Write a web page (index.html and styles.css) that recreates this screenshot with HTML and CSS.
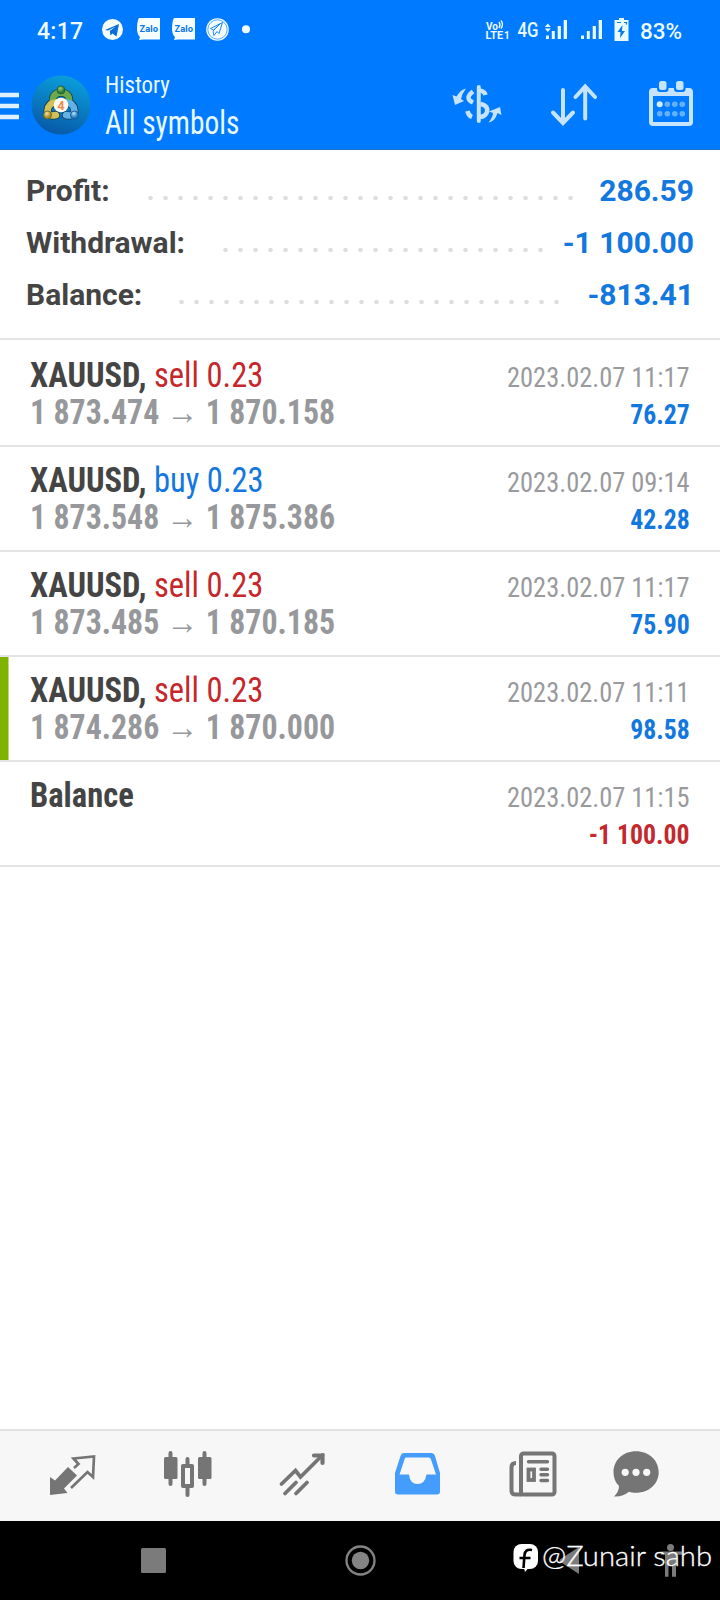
FILE: index.html
```html
<!DOCTYPE html>
<html lang="en">
<head>
<meta charset="utf-8">
<title>History</title>
<link rel="stylesheet" href="styles.css">
</head>
<body>
<div class="phone">
  <header class="top">
    <div class="status">
      <span class="clock">4:17</span>
      <svg class="notices" width="150" height="24" viewBox="101 17 150 24">
        <circle cx="112.500" cy="29.500" r="10.500" fill="#f4fdff"/>
        <path d="M105 30l14-6-2.500 12.500-4-3-2 2-.8-4.500 6-4.500-7.500 4z" fill="#0a70d8"/>
        <g><path d="M139 18h21v21.500h-17l-4 .5 1-3q-3-3-3-8 0-8 2-11z" fill="#f4fdff"/>
        <text x="139.500" y="32" class="zalo" textLength="18.500" lengthAdjust="spacingAndGlyphs">Zalo</text></g>
        <g transform="translate(35 0)"><path d="M139 18h21v21.500h-17l-4 .5 1-3q-3-3-3-8 0-8 2-11z" fill="#f4fdff"/>
        <text x="139.500" y="32" class="zalo" textLength="18.500" lengthAdjust="spacingAndGlyphs">Zalo</text></g>
        <circle cx="217.500" cy="29.500" r="11.300" fill="#f4fdff"/>
        <g fill="none" stroke="#1787f5" stroke-width="1"><circle cx="217.500" cy="29.500" r="9.700" stroke-width=".7"/><path d="M210.500 28.500l12-6-3.500 11-2-2-3 4-1-4.500 7-7-6.500 6z"/></g>
        <circle cx="246" cy="29.300" r="4" fill="#f4fdff"/>
      </svg>
      <svg class="signals" width="148" height="26" viewBox="484 16 148 26">
        <g fill="#e9faff">
          <text x="486" y="29.500" class="volte" textLength="12" lengthAdjust="spacingAndGlyphs">Vo</text>
          <text x="485.500" y="39" class="volte" textLength="17.500" lengthAdjust="spacingAndGlyphs">LTE</text>
          <text x="504" y="39" class="volte">1</text>
          <path d="M499 22q2 3 0 6M501 20.500q3 4 0 8" fill="none" stroke="#e9faff" stroke-width="1.400"/>
          <text x="517.500" y="36.500" class="fourg" textLength="21" lengthAdjust="spacingAndGlyphs">4G</text>
          <path d="M544.800 27l3-3.500 3 3.500zM544.800 28.500h6l-3 3.500zM546 35.500h3v3.500h-3zM551.800 31h3v8h-3zM557.700 26h3.200v13h-3.200zM563.700 20h3.300v19h-3.300z"/>
          <path d="M581 35.500h3v3.500h-3zM586.800 31h3v8h-3zM592.700 26h3.200v13h-3.200zM598.700 20h3.300v19h-3.300z"/>
          <path d="M619 18h5v2h4.500v21H614.500V20h4.500z"/>
        </g>
        <path d="M622.500 25l-5 7h3l-.5 6 5-7h-3z" fill="#087ae5"/>
        <path d="M617 22.500h4M624 22.500h2.500v2" stroke="#087ae5" stroke-width="1.200" fill="none"/>
      </svg>
      <span class="percent">83%</span>
    </div>
    <div class="appbar">
      <svg class="burger" width="19" height="30" viewBox="0 0 19 30"><path d="M0 5h19M0 16h19M0 27h19" stroke="#dff1ff" stroke-width="4.500"/></svg>
      <svg class="logo" width="60" height="62" viewBox="30 74 60 62">
        <defs>
          <linearGradient id="disc" x1=".7" y1="0" x2=".4" y2="1"><stop offset="0" stop-color="#0aa0dc"/><stop offset="1" stop-color="#0859a8"/></linearGradient>
          <radialGradient id="green" cx=".4" cy=".3"><stop offset="0" stop-color="#a4cf6c"/><stop offset="1" stop-color="#2a7d38"/></radialGradient>
          <radialGradient id="gold" cx=".4" cy=".3"><stop offset="0" stop-color="#f5e592"/><stop offset="1" stop-color="#a9902c"/></radialGradient>
          <radialGradient id="sky" cx=".4" cy=".3"><stop offset="0" stop-color="#b5e4fb"/><stop offset="1" stop-color="#257fc4"/></radialGradient>
        </defs>
        <circle cx="60" cy="105" r="29.600" fill="url(#disc)"/>
        <g fill="none" stroke-width="6.500" stroke-linecap="round">
          <path d="M52 102q-1-9 8-9.500 9 .5 8 9.500" stroke="#153f3c" stroke-width="8"/>
          <path d="M55 115q-8 2-8.500-4 .5-8 8-8.500" stroke="#153f3c" stroke-width="8"/>
          <path d="M65 115q8 2 8.500-4-.5-8-8-8.500" stroke="#123f6b" stroke-width="8"/>
          <path d="M52 102q-1-9 8-9.500 9 .5 8 9.500" stroke="#6aa94c"/>
          <path d="M55 115q-8 2-8.500-4 .5-8 8-8.500" stroke="#d2c05a"/>
          <path d="M65 115q8 2 8.500-4-.5-8-8-8.500" stroke="#62b2e4"/>
        </g>
        <circle cx="60" cy="90" r="4" fill="url(#green)" stroke="#1d5c35" stroke-width=".8"/>
        <circle cx="46.500" cy="115" r="4" fill="url(#gold)" stroke="#5c5a24" stroke-width=".8"/>
        <circle cx="73.500" cy="115" r="4" fill="url(#sky)" stroke="#164f86" stroke-width=".8"/>
        <circle cx="60" cy="105" r="7.300" fill="#fffaf2"/>
        <text x="56.300" y="109.800" class="four">4</text>
      </svg>
      <div class="titles"><div class="sub"><span class="cond">History</span></div><div class="main"><span class="cond">All symbols</span></div></div>
      <svg class="actions" width="243" height="50" viewBox="450 78 243 50">
        <g fill="none" stroke="#c6e4ff" stroke-width="4" stroke-linecap="round">
          <path d="M478.800 87v34"/>
          <path d="M485.500 95q-1-4-6-4.500M473 91.500q-9 7 0 11M480.500 104q8 1.500 6.500 8-1.500 4.500-7 5M467.500 111q.8 4.500 4.500 6" stroke-width="4.500" stroke-linecap="butt"/>
        </g>
        <g fill="#c6e4ff">
          <path d="M466 88.500q-5.500 1-9.500 8l-4-1.500 2.500 10 9-4-3-2q1-5.500 5-10.500z"/>
          <path d="M488.500 122.500q6.500-1 9-9.500l4 2-1.500-8-11 4.500 4 1.500q0 4-4.500 9.500z"/>
        </g>
        <path d="M563 90v32M553 112.500l10 10.500 10-10.500M585.200 118.500V87M575.500 97l9.700-10.500L595 97" fill="none" stroke="#c6e4ff" stroke-width="4" stroke-linecap="round"/>
        <rect x="651" y="90" width="40" height="34" rx="2" fill="none" stroke="#c6e4ff" stroke-width="4"/>
        <path d="M650 89h42v7h-42z" fill="#c6e4ff"/>
        <rect x="657" y="79" width="11.500" height="13" rx="3" fill="#007aff"/><rect x="674" y="79" width="11.500" height="13" rx="3" fill="#007aff"/>
        <rect x="659" y="81" width="7.500" height="9" rx="2.500" fill="#c6e4ff"/><rect x="676" y="81" width="7.500" height="9" rx="2.500" fill="#c6e4ff"/>
        <circle cx="659.700" cy="104.200" r="3" fill="#d5edff"/>
        <g fill="#65b1ff"><circle cx="667.300" cy="104.200" r="2.800"/><circle cx="674.800" cy="104.200" r="2.800"/><circle cx="682.300" cy="104.200" r="2.800"/><circle cx="659.700" cy="113.700" r="2.800"/><circle cx="667.300" cy="113.700" r="2.800"/><circle cx="674.800" cy="113.700" r="2.800"/><circle cx="682.300" cy="113.700" r="2.800"/></g>
      </svg>
    </div>
  </header>

  <section class="summary">
    <div class="line"><span class="label">Profit:</span><i class="dots d1"></i><span class="amount">286.59</span></div>
    <div class="line"><span class="label">Withdrawal:</span><i class="dots d2"></i><span class="amount">-1 100.00</span></div>
    <div class="line"><span class="label">Balance:</span><i class="dots d3"></i><span class="amount">-813.41</span></div>
  </section>

  <main class="list">
    <article class="deal"><div class="left"><p class="sym"><span class="cond"><b>XAUUSD,</b> <span class="sell">sell 0.23</span></span></p><p class="price"><span class="cond">1 873.474 <span class="arrow">→</span> 1 870.158</span></p></div><div class="right"><p class="date"><span class="cond">2023.02.07 11:17</span></p><p class="profit"><span class="cond">76.27</span></p></div></article>
    <article class="deal"><div class="left"><p class="sym"><span class="cond"><b>XAUUSD,</b> <span class="buy">buy 0.23</span></span></p><p class="price"><span class="cond">1 873.548 <span class="arrow">→</span> 1 875.386</span></p></div><div class="right"><p class="date"><span class="cond">2023.02.07 09:14</span></p><p class="profit"><span class="cond">42.28</span></p></div></article>
    <article class="deal"><div class="left"><p class="sym"><span class="cond"><b>XAUUSD,</b> <span class="sell">sell 0.23</span></span></p><p class="price"><span class="cond">1 873.485 <span class="arrow">→</span> 1 870.185</span></p></div><div class="right"><p class="date"><span class="cond">2023.02.07 11:17</span></p><p class="profit"><span class="cond">75.90</span></p></div></article>
    <article class="deal marked"><div class="left"><p class="sym"><span class="cond"><b>XAUUSD,</b> <span class="sell">sell 0.23</span></span></p><p class="price"><span class="cond">1 874.286 <span class="arrow">→</span> 1 870.000</span></p></div><div class="right"><p class="date"><span class="cond">2023.02.07 11:11</span></p><p class="profit"><span class="cond">98.58</span></p></div></article>
    <article class="deal"><div class="left"><p class="sym"><span class="cond"><b>Balance</b></span></p></div><div class="right"><p class="date"><span class="cond">2023.02.07 11:15</span></p><p class="profit loss"><span class="cond">-1 100.00</span></p></div></article>
  </main>

  <nav class="tabs">
    <svg width="720" height="90" viewBox="0 1431 720 90">
      <g fill="#757575">
        <path d="M50 1477l5 3.500 13-13.500 9 8.500-13 13 3.500 4.500-17.500 2z"/>
        <path d="M170.500 1453v31M204.500 1453v31M187.500 1459v7M187.500 1488v7" stroke="#757575" stroke-width="4" stroke-linecap="round"/>
        <rect x="164" y="1457" width="13.500" height="22" rx="1.500"/><rect x="198" y="1457" width="13.500" height="22" rx="1.500"/>
        <rect x="183" y="1466" width="9" height="20" fill="#f7f7f7" stroke="#757575" stroke-width="4" stroke-linejoin="round"/>
      </g>
      <g fill="none" stroke="#757575" stroke-width="3">
        <path d="M74 1468l4.500-4-5-5.500 20.500-2-1 20.500-5.500-5L71 1488" stroke-width="2.700"/>
        <path d="M281.500 1484l14-13.500 5 6.500 22-22M285 1493.500l11-11M296 1493.500l11-11" stroke-width="3.800" stroke-linecap="round"/>
        <path d="M314 1455.500h8.500v7.500" stroke-width="4.200" stroke-linecap="round"/>
      </g>
      <path d="M404 1453h27q3 0 4 3l5 17v18.500q0 3-3 3h-39q-3 0-3-3V1473l5.500-17q1-3 3.500-3z" fill="#449cfc"/>
      <path d="M406 1457.500h22.500q2 0 2.500 2l5 15h-9.500q-1.500 9.500-9 9.500t-8.500-9.500h-9.500l5-15q.5-2 1.500-2z" fill="#f7f7f7"/>
      <g fill="none" stroke="#757575" stroke-width="4">
        <rect x="521" y="1453.500" width="33.500" height="41" rx="2.500"/><path d="M516 1463q-4.500 0-4.500 4v24q0 3.500 4.500 3.500h6"/>
        <path d="M528.500 1461.800h19M541 1469.200h6.500M541 1474.800h6.500M541 1480.500h6.500" stroke-width="3.400" stroke-linecap="round"/>
        <rect x="528.500" y="1469.500" width="5.500" height="10.500" stroke-width="3.800"/>
      </g>
      <path d="M636 1451.300c13 0 22.700 9 22.700 21s-10 20.500-22.700 20.500c-3 0-5-.4-7-1-4 3-8.500 5-15 4.700 3.500-3.500 5-6.500 5-10.500-3.500-3.500-5.500-8-5.500-13.700 0-12 9.500-21 22.500-21z" fill="#757575"/>
      <g fill="#f7f7f7"><circle cx="625.200" cy="1472.300" r="3.600"/><circle cx="636" cy="1472.300" r="3.600"/><circle cx="646.700" cy="1472.300" r="3.600"/></g>
    </svg>
  </nav>
  <footer class="system">
    <svg width="720" height="79" viewBox="0 1521 720 79">
      <rect x="141" y="1548" width="25" height="25" rx="1.500" fill="#7b7b7b"/>
      <circle cx="360.500" cy="1560.500" r="14" fill="none" stroke="#848484" stroke-width="2.300"/><circle cx="360.500" cy="1560.500" r="8.700" fill="#848484"/>
      <path d="M579 1547v27l-18.500-12q-2-1.500 0-3z" fill="#7b7b7b"/>
      <g fill="#7b7b7b"><circle cx="670.500" cy="1547.500" r="3.500"/><path d="M661 1551.500h21v3.300h-6v22h-4v-12h-3.500v12h-3.500v-22h-4z"/></g>
      <rect x="513.500" y="1544" width="24.500" height="25" rx="8" fill="#fff"/>
      <path d="M524 1568l2-4 4 2-5 6z" fill="#fff"/>
      <path d="M532 1550c-5-1-7 1-7.500 5l-1 13M519.500 1558h11" fill="none" stroke="#000" stroke-width="2.600"/>
      <text x="542" y="1565.500" class="mark" textLength="170" lengthAdjust="spacingAndGlyphs">@Zunair sahb</text>
    </svg>
  </footer>
</div>
</body>
</html>
```
FILE: styles.css
```css
* { box-sizing: border-box; }
body { margin: 0; background: #fff; font-family: Roboto, "Liberation Sans", sans-serif; }
p { margin: 0; }
svg { display: block; flex: none; }
.phone { width: 720px; height: 1600px; display: flex; flex-direction: column; overflow: hidden; }
.cond { display: inline-block; font-family: "Roboto Condensed", Roboto, sans-serif; font-stretch: 75%; white-space: pre; transform-origin: left center; }
.top { height: 150px; background: #007aff; border-bottom: 1px solid #1a6fc8; flex: none; }
.status { height: 62px; display: flex; align-items: center; color: #eefbff; padding-left: 37px; }
.clock { width: 64px; font-size: 23px; font-weight: 500; letter-spacing: .3px; }
.notices { margin-top: -4px; }
.signals { margin: -4px 0 0 233px; }
.percent { margin-left: 8px; font-size: 22.5px; font-weight: 500; }
.zalo { font: 700 9px Inter, sans-serif; fill: #0875e8; }
.volte { font: 700 10px Roboto, sans-serif; }
.fourg { font: 500 20px Roboto, sans-serif; }
.four { font: 700 13px Roboto, sans-serif; fill: #f08a4c; }
.appbar { height: 87px; display: flex; align-items: flex-start; }
.burger { margin-top: 28px; }
.logo { margin: 12px 0 0 12px; }
.titles { margin: 7px 0 0 14px; width: 345px; color: #e8f9ff; }
.sub { font-size: 24px; line-height: 32px; }
.sub .cond { transform: scaleX(.955); }
.main { font-size: 32.5px; line-height: 44px; }
.main .cond { transform: scaleX(.905); }
.actions { margin-top: 16px; }
.summary { height: 190px; padding: 14.5px 26px 0; border-bottom: 2px solid #e4e4e4; flex: none; }
.line { height: 52px; display: flex; align-items: center; font-size: 30px; font-weight: 700; }
.label { color: #444; }
.amount { color: #1277de; margin-left: auto; }
.dots { height: 6px; margin-top: 15px; background: radial-gradient(circle at 7.500px 3px, #dedede 1.900px, transparent 2.600px) 0 0 / 15px 6px repeat-x; position: absolute; }
.d1 { left: 143px; width: 435px; }
.d2 { left: 218px; width: 330px; }
.d3 { left: 174px; width: 390px; }
.deal { height: 105px; padding: 15px 30px 0; display: flex; justify-content: space-between; border-bottom: 2px solid #e4e4e4; }
.deal:first-child { height: 107px; padding-top: 17px; }
.marked { background: linear-gradient(#80b200, #80b200) 0 0 / 8.500px 100% no-repeat; }
.sym, .price { font-size: 35px; line-height: 37px; height: 37px; color: #444; }
.sym .cond { transform: scaleX(.93); }
.price { color: #97989b; font-weight: 700; }
.price .cond { transform: scaleX(.91); }
.sell { color: #c4282c; }
.buy { color: #1277de; }
.arrow { font-weight: 400; }
.right { text-align: right; padding-top: 2px; }
.right .cond { transform-origin: right center; }
.date { font-size: 28px; line-height: 37px; color: #999a9d; }
.date .cond { transform: scaleX(.943); }
.profit { font-size: 28px; line-height: 37px; font-weight: 700; color: #1277de; }
.profit .cond { transform: scaleX(.92); }
.loss { color: #c4282c; }
.tabs { margin-top: auto; height: 92px; border-top: 2px solid #e2e2e2; background: #f7f7f7; flex: none; }
.system { height: 79px; background: #000; flex: none; }
.mark { font: 300 27.5px Lato, sans-serif; fill: #fff; stroke: #fff; stroke-width: .3px; }
```
